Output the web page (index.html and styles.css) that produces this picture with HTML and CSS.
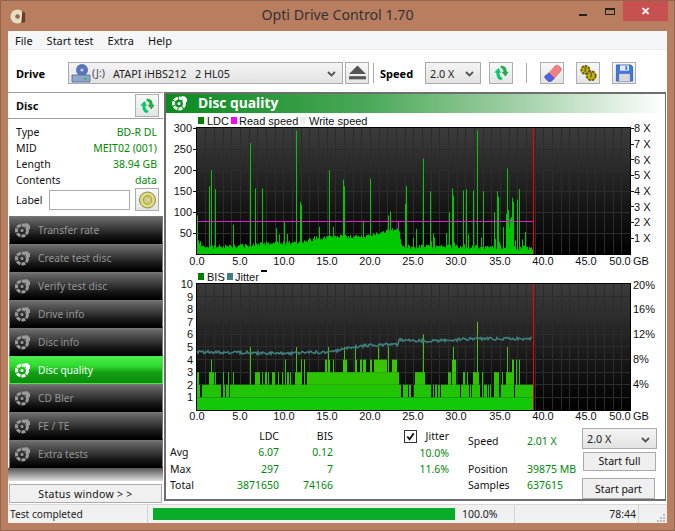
FILE: index.html
```html
<!DOCTYPE html>
<html lang="en">
<head>
<meta charset="utf-8">
<title>Opti Drive Control 1.70</title>
<link rel="stylesheet" href="styles.css">
</head>
<body>
<svg class="defs" width="0" height="0" aria-hidden="true">
  <defs>
    <symbol id="refresh" viewBox="0 0 24 22">
      <path d="M2 11 L8 4 L13 11 L10 11 C10 14 11 16 14 17 L13 20 L9 20 C6 18 5 15 5 11 Z" fill="#10c870" stroke="#fff" stroke-width=".8"/>
      <path d="M11 1 L15 2 C18 3 19 6 19 9 L22 9 L17 16 L11 9 L14 9 C14 7 13 5 10 5 Z" fill="#2aa84a" stroke="#fff" stroke-width=".8"/>
    </symbol>
    <symbol id="disc" viewBox="0 0 16 16">
      <circle cx="7" cy="8.500" r="5.500" fill="none" stroke="currentColor" stroke-width="3" stroke-dasharray="4 1"/>
      <circle cx="7" cy="8.500" r="1.500" fill="currentColor"/>
      <path d="M9.500 1 L13 1.500 L15 4 L15 7 L12 7 L10 3.500 Z" fill="currentColor"/>
    </symbol>
  </defs>
</svg>
<div class="window">
  <header class="titlebar">
    <svg class="app-icon" viewBox="0 0 18 18"><circle cx="8" cy="9" r="7.500" fill="#e8dcc0"/><circle cx="8" cy="9" r="2.400" fill="#8b6a50"/><path d="M13 3 L16 5 L16 15 L12 16 Z" fill="#6b3a2a"/></svg>
    <span class="title-text">Opti Drive Control 1.70</span>
    <div class="win-controls">
      <span class="win-min"></span>
      <span class="win-max"></span>
      <span class="win-close">✕</span>
    </div>
  </header>
  <div class="client">
    <nav class="menubar">
      <span>File</span><span>Start test</span><span>Extra</span><span>Help</span>
    </nav>
    <div class="toolbar">
      <span class="tool-label drive-label">Drive</span>
      <div class="combo drive-combo">
        <svg class="drive-icon" viewBox="0 0 20 20"><circle cx="11" cy="7" r="6" fill="#5b73b8"/><circle cx="11" cy="7" r="1.600" fill="#c8d4f0"/><path d="M1 12 H19 V19 H1 Z" fill="#8fa6c8" stroke="#50688f" stroke-width=".8"/><rect x="13" y="15" width="3" height="1.500" fill="#38b060"/></svg>
        <span class="drive-letter">(J:)</span>
        <span class="drive-name">ATAPI iHBS212&nbsp;&nbsp;&nbsp;2 HL05</span>
        <svg class="chev" viewBox="0 0 9 6"><path d="M1 1 L4.500 4.500 L8 1" fill="none" stroke="#555" stroke-width="1.800"/></svg>
      </div>
      <button class="tool-btn eject-btn"><svg viewBox="0 0 18 14"><path d="M9 0 L17 8 H1 Z" fill="#555"/><rect x="1" y="10" width="16" height="3" fill="#555"/></svg></button>
      <span class="tool-sep sep-a"></span>
      <span class="tool-label speed-label">Speed</span>
      <div class="combo speed-combo"><span>2.0 X</span><svg class="chev" viewBox="0 0 9 6"><path d="M1 1 L4.500 4.500 L8 1" fill="none" stroke="#555" stroke-width="1.800"/></svg></div>
      <button class="tool-btn refresh-btn"><svg><use href="#refresh"/></svg></button>
      <span class="tool-sep sep-b"></span>
      <button class="tool-btn erase-btn"><svg viewBox="0 0 20 20"><path d="M6 10 L13 2 C14 1 16 1 17 2 L19 4 C20 5 20 7 19 8 L12 16 Z" fill="#f08080" stroke="#d06060" stroke-width=".6"/><path d="M6 10 L12 16 L9 19 C8 20 6 20 5 19 L2 16 C1 15 1 14 2 13 Z" fill="#5060e8" stroke="#3040a0" stroke-width=".6"/></svg></button>
      <button class="tool-btn gold-btn"><svg viewBox="0 0 20 20"><circle cx="6.500" cy="6.500" r="4.500" fill="#c8b400" stroke="#6a5c00" stroke-width="2" stroke-dasharray="3 1"/><circle cx="13" cy="13" r="5" fill="#c8b400" stroke="#6a5c00" stroke-width="2" stroke-dasharray="3 1"/><rect x="5.500" y="3" width="2" height="6" fill="#6a6a50"/><rect x="12" y="9" width="2" height="6" fill="#6a6a50"/></svg></button>
      <button class="tool-btn save-btn"><svg viewBox="0 0 20 20"><path d="M1 1 H17 L19 3 V19 H1 Z" fill="#3f78d8" stroke="#2a4f9a" stroke-width=".8"/><rect x="5" y="1.500" width="10" height="6" fill="#e4e8f0"/><rect x="11" y="2.500" width="2" height="4" fill="#3f78d8"/><rect x="4" y="11" width="12" height="8" fill="#d8d8d8"/></svg></button>
    </div>
    <div class="main">
      <aside class="sidebar">
        <div class="disc-head">
          <span>Disc</span>
          <button class="tool-btn side-btn"><svg><use href="#refresh"/></svg></button>
        </div>
        <dl class="disc-info">
          <div><dt>Type</dt><dd>BD-R DL</dd></div>
          <div><dt>MID</dt><dd>MEIT02 (001)</dd></div>
          <div><dt>Length</dt><dd>38.94 GB</dd></div>
          <div><dt>Contents</dt><dd>data</dd></div>
        </dl>
        <div class="label-row">
          <span>Label</span>
          <span class="label-input"></span>
          <button class="tool-btn side-btn"><svg viewBox="0 0 18 18"><circle cx="9" cy="9" r="8" fill="#e2dc80" stroke="#8a8a50"/><circle cx="9" cy="9" r="4" fill="none" stroke="#a8a458" stroke-width="1.500"/><circle cx="9" cy="9" r="1.500" fill="#fff" stroke="#808050" stroke-width=".6"/></svg></button>
        </div>
        <div class="nav-list">
          <div class="nav-item"><svg><use href="#disc"/></svg><span>Transfer rate</span></div>
          <div class="nav-item"><svg><use href="#disc"/></svg><span>Create test disc</span></div>
          <div class="nav-item"><svg><use href="#disc"/></svg><span>Verify test disc</span></div>
          <div class="nav-item"><svg><use href="#disc"/></svg><span>Drive info</span></div>
          <div class="nav-item"><svg><use href="#disc"/></svg><span>Disc info</span></div>
          <div class="nav-item active"><svg><use href="#disc"/></svg><span>Disc quality</span></div>
          <div class="nav-item"><svg><use href="#disc"/></svg><span>CD Bler</span></div>
          <div class="nav-item"><svg><use href="#disc"/></svg><span>FE / TE</span></div>
          <div class="nav-item"><svg><use href="#disc"/></svg><span>Extra tests</span></div>
          <div class="nav-tail"></div>
        </div>
        <button class="status-btn">Status window &gt; &gt;</button>
      </aside>
      <section class="panel">
        <div class="panel-title"><svg><use href="#disc"/></svg><span>Disc quality</span></div>
        <svg class="chart chart-top" viewBox="166 113 500 155">
          <defs><linearGradient id="plotbg" x1="0" y1="0" x2="0" y2="1"><stop offset="0" stop-color="#3c3c3c"/><stop offset="1" stop-color="#000"/></linearGradient></defs>
          <rect x="198" y="117" width="6" height="7" fill="#008000"/><text x="207" y="125">LDC</text>
          <rect x="231" y="117" width="6" height="7" fill="#ff00ff"/><text x="239" y="125">Read speed</text>
          <rect x="300" y="117" width="6" height="7" fill="#eee"/><text x="309" y="125">Write speed</text>
          <rect x="196.500" y="127.500" width="434" height="127" fill="url(#plotbg)" stroke="#000"/>
          <g id="grid1"></g><path id="ldc" fill="none" stroke="#00c800"/>
          <path d="M197 221.500 H398.500 V229 V221.500 H533" fill="none" stroke="#e020d0"/>
          <path d="M533.500 128 V254" stroke="#f00"/>
          <g class="ya">
            <text x="192" y="132">300</text><text x="192" y="153">250</text><text x="192" y="174">200</text><text x="192" y="195">150</text><text x="192" y="216">100</text><text x="192" y="237">50</text>
          </g>
          <g class="tk"><path d="M193 128.500H197M193 149.500H197M193 170.500H197M193 191.500H197M193 212.500H197M193 233.500H197M630 128.500H634M630 144.500H634M630 159.500H634M630 175.500H634M630 191.500H634M630 206.500H634M630 222.500H634M630 238.500H634"/></g>
          <g>
            <text x="634" y="132">8 X</text><text x="634" y="148">7 X</text><text x="634" y="164">6 X</text><text x="634" y="179">5 X</text><text x="634" y="195">4 X</text><text x="634" y="211">3 X</text><text x="634" y="226">2 X</text><text x="634" y="242">1 X</text>
          </g>
          <g class="xa">
            <text x="197" y="265">0.0</text><text x="240" y="265">5.0</text><text x="284" y="265">10.0</text><text x="327" y="265">15.0</text><text x="370" y="265">20.0</text><text x="413" y="265">25.0</text><text x="456" y="265">30.0</text><text x="500" y="265">35.0</text><text x="543" y="265">40.0</text><text x="586" y="265">45.0</text><text x="620" y="265">50.0</text>
          </g>
          <text x="633" y="265">GB</text>
        </svg>
        <svg class="chart chart-bottom" viewBox="166 268 500 156">
          <rect x="198" y="273" width="6" height="7" fill="#008000"/><text x="207" y="281">BIS</text>
          <rect x="227" y="273" width="6" height="7" fill="#408080"/><text x="235" y="281">Jitter</text>
          <rect x="261" y="270" width="6" height="2" fill="#000"/>
          <rect x="196.500" y="283.500" width="434" height="127" fill="url(#plotbg)" stroke="#000"/>
          <g id="grid2"></g><g id="bis"></g><path id="jit" fill="none" stroke="#408080" stroke-width="1.500"/>
          <path d="M533.500 284 V410" stroke="#f00"/>
          <g class="ya">
            <text x="193" y="288">10</text><text x="193" y="301">9</text><text x="193" y="313">8</text><text x="193" y="326">7</text><text x="193" y="338">6</text><text x="193" y="351">5</text><text x="193" y="364">4</text><text x="193" y="376">3</text><text x="193" y="389">2</text><text x="193" y="401">1</text>
          </g>
          <g>
            <text x="633" y="289">20%</text><text x="633" y="313">16%</text><text x="633" y="338">12%</text><text x="633" y="363">8%</text><text x="633" y="388">4%</text>
          </g>
          <g class="xa">
            <text x="197" y="420">0.0</text><text x="240" y="420">5.0</text><text x="284" y="420">10.0</text><text x="327" y="420">15.0</text><text x="370" y="420">20.0</text><text x="413" y="420">25.0</text><text x="456" y="420">30.0</text><text x="500" y="420">35.0</text><text x="543" y="420">40.0</text><text x="586" y="420">45.0</text><text x="620" y="420">50.0</text>
          </g>
          <text x="633" y="420">GB</text>
        </svg>
        <div class="stats">
          <div class="stat-table">
            <span></span><b>LDC</b><b>BIS</b>
            <span>Avg</span><i>6.07</i><i>0.12</i>
            <span>Max</span><i>297</i><i>7</i>
            <span>Total</span><i>3871650</i><i>74166</i>
          </div>
          <div class="jitter-col">
            <div class="jitter-head"><span class="check"><svg viewBox="0 0 12 12"><path d="M2.500 6 L5 9 L9.500 2.500" fill="none" stroke="#111" stroke-width="2"/></svg></span><span>Jitter</span></div>
            <i>10.0%</i>
            <i>11.6%</i>
          </div>
          <div class="speed-col">
            <span>Speed</span><i>2.01 X</i>
            <span>Position</span><i>39875 MB</i>
            <span>Samples</span><i>637615</i>
          </div>
          <div class="action-col">
            <div class="combo action-combo"><span>2.0 X</span><svg class="chev" viewBox="0 0 9 6"><path d="M1 1 L4.500 4.500 L8 1" fill="none" stroke="#555" stroke-width="1.800"/></svg></div>
            <button class="action-btn">Start full</button>
            <button class="action-btn part">Start part</button>
          </div>
        </div>
      </section>
    </div>
    <footer class="statusbar">
      <span class="st-msg">Test completed</span>
      <span class="st-bar"><span class="st-fill"></span></span>
      <span class="st-pct">100.0%</span>
      <span class="st-time">78:44</span>
      <span class="st-grip"><svg viewBox="0 0 8 8"><path d="M6 0h2v2H6zM3 3h2v2H3zM6 3h2v2H6zM0 6h2v2H0zM3 6h2v2H3zM6 6h2v2H6z" fill="#bbb"/></svg></span>
    </footer>
  </div>
</div>
<script src="charts.js"></script>
</body>
</html>
```
FILE: styles.css
```css
* { box-sizing: border-box; }
html, body { margin: 0; padding: 0; }
body { width: 675px; height: 531px; overflow: hidden; font: 10.500px "Noto Sans", "Liberation Sans", sans-serif; color: #111; }
.defs { position: absolute; }
button { font: inherit; color: inherit; padding: 0; }
i { font-style: normal; }
.window { width: 675px; height: 531px; background: #b97d60; border: 1px solid #96654e; padding: 0 7px 7px; display: flex; flex-direction: column; }
.titlebar { height: 30px; flex: none; display: flex; align-items: center; position: relative; }
.app-icon { width: 17px; height: 17px; margin: 0 0 0 2px; }
.title-text { position: absolute; left: 0; right: 0; text-align: center; font-size: 14.200px; color: #333; top: 4px; }
.win-controls { position: absolute; right: -1px; top: 0; display: flex; align-items: flex-start; }
.win-min { width: 8px; height: 2px; background: #222; margin: 13px 18px 0 0; }
.win-max { width: 10px; height: 7px; border: 1px solid #222; border-top-width: 2px; margin: 7px 8px 0 0; }
.win-close { width: 45px; height: 20px; background: #c75050; color: #fff; text-align: center; font-size: 11px; line-height: 20px; font-weight: 700; }
.client { flex: 1; min-height: 0; background: #fff; display: flex; flex-direction: column; }
.menubar { height: 19px; flex: none; background: #f5f6f7; border-bottom: 1px solid #eceded; display: flex; gap: 14px; padding: 1px 0 0 7px; font-size: 11px; line-height: 18px; color: #111; }
.toolbar { height: 42px; flex: none; display: flex; align-items: center; position: relative; padding: 4px 0 0 8px; }
.tool-label { font-weight: 700; font-size: 11px; color: #000; }
.drive-label { width: 52px; }
.combo { height: 22px; background: linear-gradient(#f4f4f4, #e2e2e2); border: 1px solid #ababab; display: flex; align-items: center; font-size: 10.800px; color: #222; position: relative; }
.chev { width: 9px; height: 6px; position: absolute; right: 6px; top: 8px; }
.drive-combo { width: 275px; padding-left: 2px; }
.drive-icon { width: 20px; height: 20px; }
.drive-letter { margin: 0 8px 0 1px; font-size: 10.500px; color: #445; }
.tool-btn { width: 24px; height: 22px; background: linear-gradient(#f8f8f8, #e4e4e4); border: 1px solid #adadad; display: inline-flex; align-items: center; justify-content: center; }
.tool-btn svg { width: 19px; height: 18px; }
.eject-btn { margin-left: 2px; }
.tool-sep { width: 1px; height: 20px; background: #aaa; }
.sep-a { margin-left: 4px; }
.speed-label { margin-left: 6px; width: 45px; }
.speed-combo { width: 56px; padding-left: 4px; }
.refresh-btn { margin-left: 8px; }
.sep-b { margin-left: 13px; }
.erase-btn { margin-left: 13px; }
.gold-btn { margin-left: 12px; }
.save-btn { margin-left: 12px; }
.main { flex: 1; min-height: 0; display: flex; }
.sidebar { width: 155px; flex: none; display: flex; flex-direction: column; }
.disc-head { height: 27px; border-bottom: 1px solid #a0a0a0; border-top: 1px solid #a0a0a0; display: flex; align-items: center; justify-content: space-between; padding: 1px 4px 0 8px; font-weight: 700; font-size: 11px; }
.side-btn { width: 24px; height: 23px; }
.disc-info { margin: 5px 0 0; padding: 0 6px 0 8px; }
.disc-info div { display: flex; justify-content: space-between; height: 16.300px; line-height: 16px; }
.disc-info dd { margin: 0; color: #008a00; }
.label-row { display: flex; align-items: center; margin-top: -1px; padding: 0 4px 0 8px; height: 24px; }
.label-row span:first-child { width: 33px; }
.label-input { width: 81px; height: 20px; border: 1px solid #ababab; background: #fff; margin-right: 5px; }
.nav-list { margin-top: 5px; flex: none; display: flex; flex-direction: column; }
.nav-item { height: 28px; margin-left: 1px; border: 1px solid #777; border-bottom-color: #000; background: linear-gradient(#6e6e6e 0%, #4a4a4a 30%, #141414 75%, #000 100%); color: #959595; display: flex; align-items: center; padding-left: 5px; gap: 7px; font-size: 10.200px; }
.nav-item svg { width: 16px; height: 16px; color: #9a9a9a; flex: none; }
.nav-item.active { background: linear-gradient(#46f046 0%, #30d830 35%, #12a012 60%, #0c8c0c 100%); border-color: #50e050; color: #f4fff4; }
.nav-item.active svg { color: #fff; }
.nav-tail { height: 13px; background: linear-gradient(#555, #ddd); }
.status-btn { margin: 3px 1px 1px; height: 19px; background: #f0f0f0; border: 1px solid #ababab; color: #111; letter-spacing: .3px; }
.panel { flex: 1; min-width: 0; margin: 0 1px 3px 1px; border: 2px solid #6e6e6e; border-width: 2px 1px 2px 2px; display: flex; flex-direction: column; }
.panel-title { height: 19px; flex: none; background: linear-gradient(90deg, #0b8a1f 0%, #4aa858 40%, #a0cfa5 70%, #fff 100%); color: #fff; display: flex; align-items: center; padding: 0 0 2px 6px; font: 700 13.800px "Open Sans", "Liberation Sans", sans-serif; gap: 10px; }
.panel-title svg { width: 16px; height: 16px; color: #fff; }
.chart { display: block; width: 500px; flex: none; font: 11px "Liberation Sans", sans-serif; fill: #111; }
.chart-top { height: 155px; }
.chart-bottom { height: 156px; }
.ya text { text-anchor: end; }
.xa text { text-anchor: middle; }
.tk path { stroke: #111; fill: none; }
.stats { flex: 1; min-height: 0; display: flex; position: relative; }
.stats i { color: #00890b; }
.stat-table { width: 167px; margin-left: 2px; display: grid; grid-template-columns: 43px 68px 54px; grid-auto-rows: 16.300px; padding-top: 4px; line-height: 16px; }
.stat-table b { font-weight: 400; text-align: right; }
.stat-table i { text-align: right; }
.stat-table span:nth-child(n+4) { padding-left: 2px; }
.jitter-col { width: 114px; display: flex; flex-direction: column; align-items: flex-end; padding: 4px 0 0; line-height: 16px; }
.jitter-head { display: flex; align-items: center; gap: 9px; height: 16px; margin-bottom: .6px; }
.jitter-col i { height: 16.300px; }
.check { width: 13px; height: 13px; border: 1px solid #333; background: #fff; display: block; }
.check svg { display: block; width: 11px; height: 11px; }
.speed-col { margin-left: 19px; width: 114px; display: grid; grid-template-columns: 59px 1fr; grid-template-rows: 28px 16px 16px; padding-top: 9px; line-height: 16px; }
.action-col { display: flex; flex-direction: column; padding-top: 4px; align-items: flex-start; }
.action-combo { width: 75px; height: 21px; padding-left: 4px; }
.action-btn { width: 73px; height: 20px; margin: 3px 0 0 1px; background: #efefef; border: 1px solid #ababab; }
.action-btn.part { margin: 7px 0 0; height: 21px; }
.statusbar { height: 19px; flex: none; background: #f0f0f0; border-top: 1px solid #d8d8d8; display: flex; align-items: center; color: #222; }
.st-msg { width: 140px; padding-left: 2px; border-right: 1px solid #d4d4d4; height: 100%; line-height: 18px; font-size: 10.200px; }
.st-bar { width: 302px; height: 12px; margin-left: 5px; background: #e6e6e6; }
.st-fill { display: block; height: 100%; background: #0aad2a; }
.st-pct { width: 53px; margin-left: 7px; border-right: 1px solid #d4d4d4; height: 100%; line-height: 18px; }
.st-time { width: 124px; text-align: right; padding-right: 2px; border-right: 1px solid #d4d4d4; height: 100%; line-height: 18px; }
.st-grip { flex: 1; display: flex; justify-content: flex-end; align-items: flex-end; height: 100%; padding: 0 2px 1px 0; }
.st-grip svg { width: 8px; height: 8px; }
```
FILE: charts.js
```js
(function () {
  var seed = 12345;
  function rnd() { seed = (seed * 1103515 + 12345) % 2147483648; return seed / 2147483648; }
  var NS = 'http://www.w3.org/2000/svg';
  function lerp(pts, x) {
    for (var i = 1; i < pts.length; i++) {
      if (x <= pts[i][0]) {
        var a = pts[i - 1], b = pts[i];
        return a[1] + (b[1] - a[1]) * (x - a[0]) / (b[0] - a[0]);
      }
    }
    return pts[pts.length - 1][1];
  }
  function grid(id, top, bottom, ys) {
    var d = '';
    for (var g = 1; g < 50; g++) {
      var x = Math.round(196.5 + g * 8.67) + 0.5;
      d += 'M' + x + ' ' + top + 'V' + bottom;
    }
    ys.forEach(function (y) { d += 'M197 ' + y + 'H630'; });
    var p = document.createElementNS(NS, 'path');
    p.setAttribute('d', d);
    p.setAttribute('stroke', '#2c2c2c');
    p.setAttribute('fill', 'none');
    document.getElementById(id).appendChild(p);
  }
  grid('grid1', 128, 254, [149.5, 170.5, 191.5, 212.5, 233.5]);
  grid('grid2', 284, 410, [296.5, 309.5, 321.5, 334.5, 346.5, 359.5, 372.5, 384.5, 397.5]);

  // LDC per-pixel columns
  var base = [[197, 38], [202, 17], [245, 20], [265, 25], [300, 28], [315, 38], [340, 42], [370, 42], [385, 55], [398, 60], [402, 18], [440, 18], [533, 14]];
  var spikes = { 197: 92, 209: 162, 211: 200, 215: 155, 233: 70, 250: 265, 255: 157, 262: 157, 276: 62, 279: 47, 284: 78, 287: 48, 296: 295, 300: 125, 301: 118, 319: 65, 329: 200, 333: 65, 343: 178, 344: 162, 363: 80, 370: 180, 388: 92, 390: 102, 405: 120, 406: 162, 416: 60, 423: 228, 430: 150, 449: 100, 452: 157, 453: 140, 463: 152, 466: 155, 473: 152, 477: 295, 483: 150, 494: 100, 497: 150, 498: 137, 503: 65, 507: 205, 508: 105, 512: 135, 513: 125, 517: 130, 519: 155 };
  var d = '';
  for (var x = 197; x < 533; x++) {
    var v = lerp(base, x) + (rnd() - 0.5) * 10;
    if (x > 402 && rnd() < 0.22) v += rnd() * 35;
    if (x > 505 && x < 514) v = 60 + rnd() * 40;
    if (spikes[x]) v = spikes[x];
    if (v < 4) v = 4;
    d += 'M' + (x + 0.5) + ' 254V' + (254 - v * 0.418).toFixed(1);
  }
  document.getElementById('ldc').setAttribute('d', d);

  // BIS: level per pixel column
  function fill(arr, from, to, lvl) {
    for (var i = from; i <= to; i++) { arr[i] = lvl; }
  }
  var lv = {};
  for (var px = 197; px < 533; px++) lv[px] = 2;
  [[200, 201], [221, 222], [225, 225], [228, 229], [401, 402], [408, 408], [411, 413]].forEach(function (r) { fill(lv, r[0], r[1], 1); });
  [[197, 198], [209, 213], [215, 215], [223, 223], [228, 228], [233, 233], [255, 259], [262, 262], [265, 266], [268, 268], [272, 274], [278, 278], [282, 282], [287, 288], [290, 290], [295, 301], [307, 398], [415, 424]].forEach(function (r) { fill(lv, r[0], r[1], 3); });
  [[211, 211], [285, 285], [296, 296], [301, 301], [304, 304], [325, 326], [328, 329], [333, 333], [343, 346], [355, 356], [360, 361], [363, 365], [370, 371], [374, 386], [392, 396]].forEach(function (r) { fill(lv, r[0], r[1], 4); });
  [[250, 250, 5], [296, 296, 5], [328, 328, 5], [344, 344, 5], [355, 355, 5], [378, 378, 5], [388, 388, 5], [423, 423, 6]].forEach(function (r) { fill(lv, r[0], r[1], r[2]); });
  for (px = 425; px < 533; px++) lv[px] = rnd() < 0.28 ? 1 : 2;
  [[422, 424], [448, 450], [452, 455], [463, 464], [467, 467], [473, 478], [482, 482], [494, 498], [502, 502], [506, 512]].forEach(function (r) { fill(lv, r[0], r[1], 3); });
  [[452, 455, 4], [512, 513, 4], [516, 516, 4], [519, 519, 4], [453, 453, 5], [507, 507, 5], [423, 423, 6], [477, 477, 7]].forEach(function (r) { fill(lv, r[0], r[1], r[2]); });

  var colors = ['#12c808', '#20c404', '#2cc400', '#38c400', '#44c400', '#50c400', '#5cc400'];
  var groups = colors.map(function () { return ''; });
  for (px = 197; px < 533; px++) {
    for (var k = 0; k < lv[px]; k++) {
      var yb = 410 - k * 12.6, yt = 410 - (k + 1) * 12.6;
      groups[k] += 'M' + (px + 0.5) + ' ' + yb.toFixed(1) + 'V' + yt.toFixed(1);
    }
  }
  var bis = document.getElementById('bis');
  groups.forEach(function (g, i) {
    var p = document.createElementNS(NS, 'path');
    p.setAttribute('d', g);
    p.setAttribute('stroke', colors[i]);
    p.setAttribute('fill', 'none');
    bis.appendChild(p);
  });

  // Jitter trace
  var jit = [[197, 352], [265, 353], [300, 353], [330, 352], [345, 349], [360, 346], [395, 344], [398, 345], [399, 340], [430, 341], [470, 339], [533, 338.5]];
  var j = '';
  for (px = 197; px < 533; px++) {
    j += (j ? 'L' : 'M') + px + ' ' + (lerp(jit, px) + (rnd() - 0.5) * 3).toFixed(1);
  }
  document.getElementById('jit').setAttribute('d', j);
})();
```
